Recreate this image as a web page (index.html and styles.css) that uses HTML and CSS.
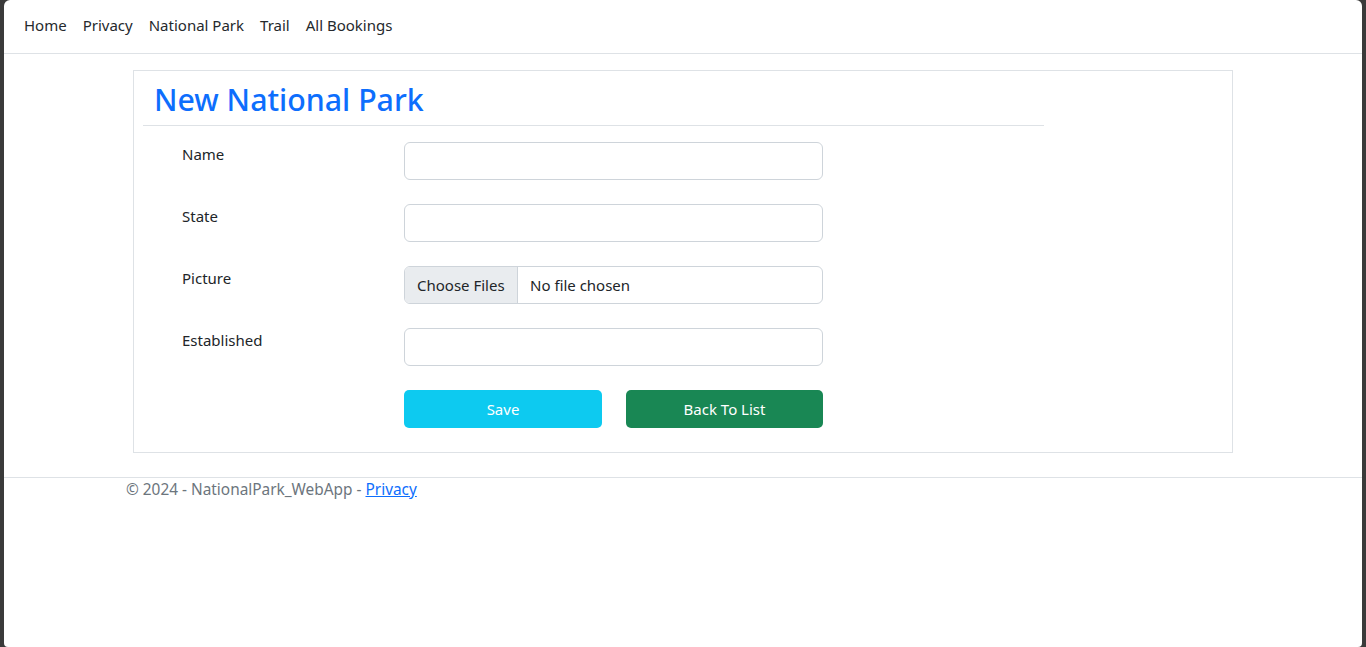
FILE: index.html
```html
<!DOCTYPE html>
<html lang="en">
<head>
<meta charset="utf-8">
<title>New National Park - NationalPark_WebApp</title>
<link rel="stylesheet" href="styles.css">
</head>
<body>
<div class="frame">
  <div class="page">
    <header class="navbar">
      <nav class="nav">
        <a class="nav-link" href="#">Home</a>
        <a class="nav-link" href="#">Privacy</a>
        <a class="nav-link" href="#">National Park</a>
        <a class="nav-link" href="#">Trail</a>
        <a class="nav-link" href="#">All Bookings</a>
      </nav>
    </header>
    <main class="main">
      <form class="card">
        <h2 class="title">New National Park</h2>
        <div class="form-rows">
          <div class="form-row">
            <label class="form-label">Name</label>
            <input class="form-control" type="text">
          </div>
          <div class="form-row">
            <label class="form-label">State</label>
            <input class="form-control" type="text">
          </div>
          <div class="form-row">
            <label class="form-label">Picture</label>
            <div class="file-control">
              <span class="file-btn">Choose Files</span>
              <span class="file-name">No file chosen</span>
            </div>
          </div>
          <div class="form-row">
            <label class="form-label">Established</label>
            <input class="form-control" type="text">
          </div>
          <div class="form-row">
            <span class="form-label"></span>
            <div class="btn-group">
              <button type="button" class="btn btn-info">Save</button>
              <a href="#" class="btn btn-success">Back To List</a>
            </div>
          </div>
        </div>
      </form>
    </main>
    <footer class="footer">
      <div class="footer-inner">© 2024 - NationalPark_WebApp - <a href="#">Privacy</a></div>
    </footer>
  </div>
</div>
</body>
</html>
```

FILE: styles.css
```css
* { box-sizing: border-box; }
html, body { margin: 0; padding: 0; }
body {
  font-family: "Noto Sans", "Liberation Sans", sans-serif;
  font-size: 15px;
  line-height: 24px;
  color: #212529;
  background: #3a3a3a;
}
.frame {
  height: 647px;
  padding: 0 4px;
  background: #3a3a3a;
}
.page {
  height: 100%;
  background: #ffffff;
  border-top-left-radius: 6px;
  border-top-right-radius: 6px;
  border-bottom-left-radius: 4px;
  border-bottom-right-radius: 4px;
  overflow: hidden;
}
.navbar {
  height: 54px;
  border-bottom: 1px solid #dee2e6;
  padding: 0 12px 4px;
  display: flex;
  align-items: center;
}
.nav { display: flex; }
.nav-link {
  padding: 0 8px;
  color: #25292d;
  text-decoration: none;
}
.main {
  padding-top: 16px;
  padding-bottom: 24px;
  display: flex;
  justify-content: center;
}
.card {
  width: 1100px;
  border: 1px solid #dee2e6;
  padding: 10px 9px 24px;
  margin: 0;
}
.title {
  width: 901px;
  margin: 0;
  padding: 0 11px 6px;
  font-size: 30.3px;
  line-height: 38px;
  font-weight: 500;
  color: #0d6efd;
  border-bottom: 1px solid #dee2e6;
}
.form-rows {
  padding-top: 16px;
  display: flex;
  flex-direction: column;
  gap: 24px;
}
.form-row {
  display: flex;
  padding-left: 39px;
}
.form-label {
  width: 222px;
  flex: none;
}
.form-control {
  width: 419px;
  height: 38px;
  border: 1px solid #ced4da;
  border-radius: 6px;
  padding: 6px 12px;
  font: inherit;
  color: #212529;
  background: #fff;
}
.file-control {
  width: 419px;
  height: 38px;
  border: 1px solid #ced4da;
  border-radius: 6px;
  display: flex;
  overflow: hidden;
  white-space: nowrap;
}
.file-btn {
  background: #e9ecef;
  border-right: 1px solid #ced4da;
  padding: 6px 12px;
  width: 113px;
  flex: none;
  color: #212529;
}
.file-name {
  padding: 6px 12px;
}
.btn-group {
  width: 419px;
  display: grid;
  grid-template-columns: 198px 197px;
  gap: 24px;
}
.btn {
  height: 38px;
  border: 0;
  border-radius: 5px;
  font: inherit;
  color: #fff;
  display: flex;
  align-items: center;
  justify-content: center;
  text-decoration: none;
}
.btn-info { background: #0dcaf0; }
.btn-success { background: #198754; }
.footer {
  border-top: 1px solid #dee2e6;
}
.footer-inner {
  width: 1140px;
  margin: 0 auto;
  padding: 0 13px;
  color: #6c757d;
  font-size: 15.4px;
  line-height: 24px;
}
.footer-inner a { color: #0d6efd; }
```
